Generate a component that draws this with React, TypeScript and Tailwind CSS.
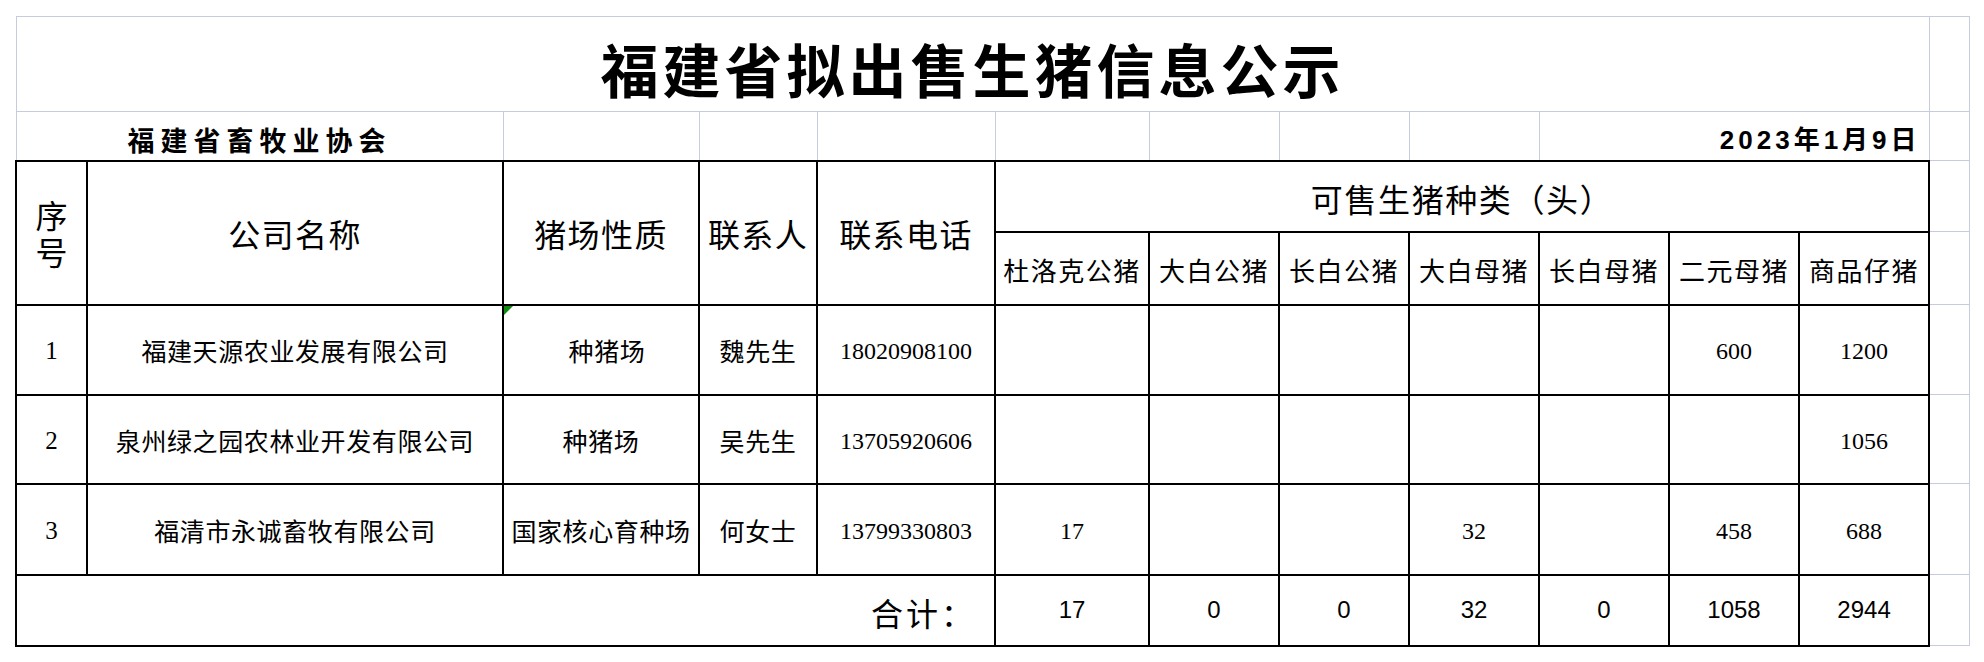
import React from "react";

type Row = { n: string; name: string; kind: string; person: string; phone: string; v: string[]; shift?: boolean };

const rows: Row[] = [
  { n: "1", name: "福建天源农业发展有限公司", kind: "种猪场", person: "魏先生", phone: "18020908100", v: ["", "", "", "", "", "600", "1200"], shift: true },
  { n: "2", name: "泉州绿之园农林业开发有限公司", kind: "种猪场", person: "吴先生", phone: "13705920606", v: ["", "", "", "", "", "", "1056"] },
  { n: "3", name: "福清市永诚畜牧有限公司", kind: "国家核心育种场", person: "何女士", phone: "13799330803", v: ["17", "", "", "32", "", "458", "688"] },
];

const kinds = ["杜洛克公猪", "大白公猪", "长白公猪", "大白母猪", "长白母猪", "二元母猪", "商品仔猪"];
const totals = ["17", "0", "0", "32", "0", "1058", "2944"];
const widths = [71, 416, 196, 118, 178, 154, 130, 130, 130, 130, 130, 130, 40];

export default function App() {
  return (
    <div className="min-h-screen bg-white pl-[15px] pt-[16px] text-black font-['Noto_Sans_CJK_SC',sans-serif]">
      <table className="table-fixed border-collapse w-[1953px]">
        <colgroup>
          {widths.map((w, i) => <col key={i} style={{ width: w }} />)}
        </colgroup>
        <tbody>
          {/* title */}
          <tr className="h-[95px]">
            <td colSpan={12} className="border border-[#c6cbdd] p-0 pt-[8px] text-center align-middle text-[58px] font-bold leading-none tracking-[4px]">
              福建省拟出售生猪信息公示
            </td>
            <td className="border border-[#c6cbdd] p-0" />
          </tr>

          {/* association / date */}
          <tr className="h-[49px]">
            <td colSpan={2} className="border border-[#c6cbdd] p-0 pb-[7px] text-center align-bottom text-[27px] font-bold leading-none tracking-[6px]">
              福建省畜牧业协会
            </td>
            {[0, 1, 2, 3, 4, 5, 6].map(i => <td key={i} className="border border-[#c6cbdd] p-0" />)}
            <td colSpan={3} className="border border-[#c6cbdd] p-0 pb-[7px] pr-[8px] text-right align-bottom text-[26px] font-bold leading-none tracking-[4px] font-['Liberation_Sans','Noto_Sans_CJK_SC',sans-serif]">
              2023年1月9日
            </td>
            <td className="border border-[#c6cbdd] p-0" />
          </tr>

          {/* header */}
          <tr className="h-[71px]">
            <td rowSpan={2} className="border-2 border-black p-0 text-center align-middle text-[32px]">
              <div className="leading-[32px]">序</div>
              <div className="mt-[5px] leading-[32px]">号</div>
            </td>
            <td rowSpan={2} className="border-2 border-black p-0 text-center align-middle text-[32px] tracking-[1.4px]">公司名称</td>
            <td rowSpan={2} className="border-2 border-black p-0 text-center align-middle text-[32px] tracking-[1.4px]">猪场性质</td>
            <td rowSpan={2} className="border-2 border-black p-0 text-center align-middle text-[32px] tracking-[1.4px]">联系人</td>
            <td rowSpan={2} className="border-2 border-black p-0 text-center align-middle text-[32px] tracking-[1.4px]">联系电话</td>
            <td colSpan={7} className="border-2 border-black p-0 pt-[4px] text-center align-middle text-[32px] tracking-[1.6px]">可售生猪种类（头）</td>
            <td className="border border-[#c6cbdd] p-0" />
          </tr>
          <tr className="h-[73px]">
            {kinds.map(k => (
              <td key={k} className="border-2 border-black p-0 pt-[2px] text-center align-middle text-[26px] tracking-[1.5px] whitespace-nowrap">{k}</td>
            ))}
            <td className="border border-[#c6cbdd] p-0" />
          </tr>

          {/* data */}
          {rows.map((r, ri) => (
            <tr key={r.n} className={ri === 1 ? "h-[89px]" : ri === 2 ? "h-[91px]" : "h-[90px]"}>
              <td className="border-2 border-black p-0 pt-[3px] text-center align-middle text-[25px] font-['Liberation_Serif',serif]">{r.n}</td>
              <td className="border-2 border-black p-0 pt-[3px] text-center align-middle text-[25px] tracking-[0.6px] whitespace-nowrap">{r.name}</td>
              <td className={`relative border-2 border-black p-0 pt-[3px] text-center align-middle text-[25px] tracking-[0.6px] whitespace-nowrap ${r.shift ? "pl-[12px]" : ""}`}>
                {r.shift && (
                  <svg className="absolute left-0 top-0" width="10" height="10" viewBox="0 0 10 10">
                    <polygon points="0,0 9,0 0,9" fill="#108a10" />
                  </svg>
                )}
                {r.kind}
              </td>
              <td className="border-2 border-black p-0 pt-[3px] text-center align-middle text-[25px] tracking-[0.6px] whitespace-nowrap">{r.person}</td>
              <td className="border-2 border-black p-0 pt-[3px] text-center align-middle text-[24px] font-['Liberation_Serif',serif]">{r.phone}</td>
              {r.v.map((v, i) => (
                <td key={i} className="border-2 border-black p-0 pt-[3px] text-center align-middle text-[24px] font-['Liberation_Serif',serif]">{v}</td>
              ))}
              <td className="border border-[#c6cbdd] p-0" />
            </tr>
          ))}

          {/* totals */}
          <tr className="h-[71px]">
            <td colSpan={5} className="border-2 border-black p-0 pt-[4px] pr-[18px] text-right align-middle text-[32px] tracking-[3px]">合计：</td>
            {totals.map((t, i) => (
              <td key={i} className="border-2 border-black p-0 text-center align-middle text-[24px] font-['Liberation_Sans',sans-serif]">{t}</td>
            ))}
            <td className="border border-[#c6cbdd] p-0" />
          </tr>
        </tbody>
      </table>
    </div>
  );
}
